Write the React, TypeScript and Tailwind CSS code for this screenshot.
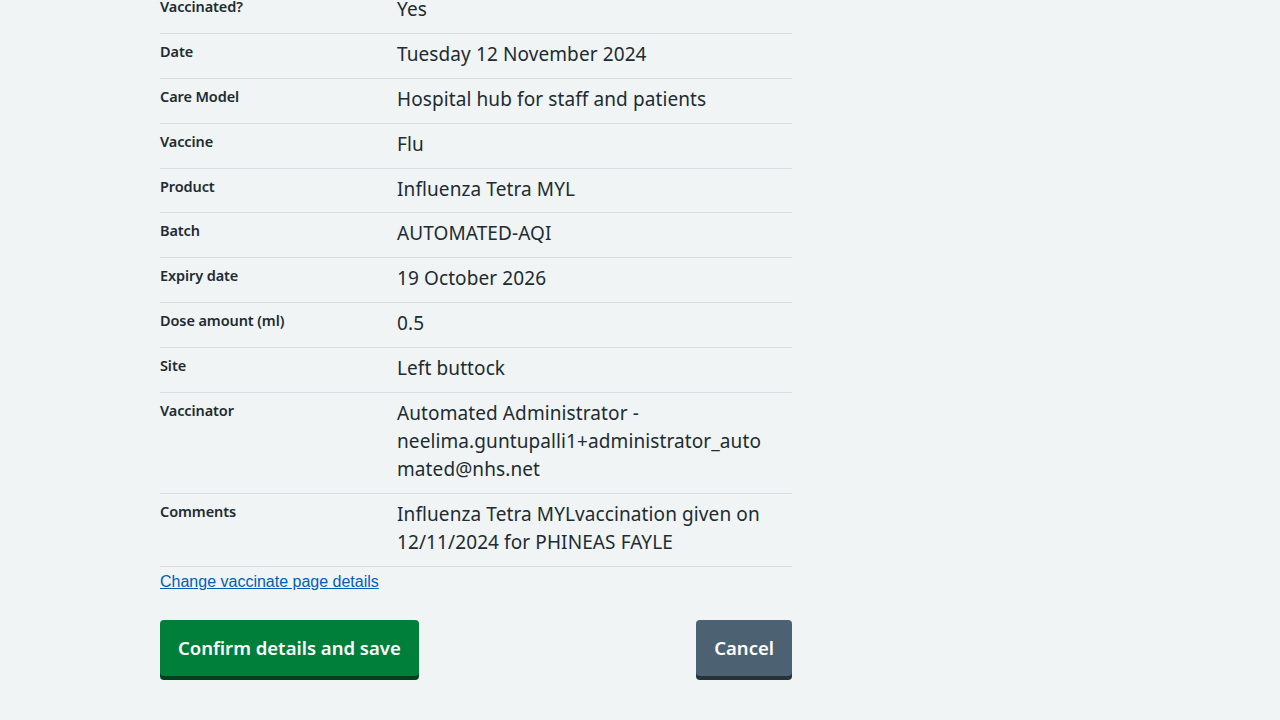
const rows: { label: string; value: string[] }[] = [
  { label: "Vaccinated?", value: ["Yes"] },
  { label: "Date", value: ["Tuesday 12 November 2024"] },
  { label: "Care Model", value: ["Hospital hub for staff and patients"] },
  { label: "Vaccine", value: ["Flu"] },
  { label: "Product", value: ["Influenza Tetra MYL"] },
  { label: "Batch", value: ["AUTOMATED-AQI"] },
  { label: "Expiry date", value: ["19 October 2026"] },
  { label: "Dose amount (ml)", value: ["0.5"] },
  { label: "Site", value: ["Left buttock"] },
  {
    label: "Vaccinator",
    value: ["Automated Administrator -", "neelima.guntupalli1+administrator_auto", "mated@nhs.net"],
  },
  {
    label: "Comments",
    value: ["Influenza Tetra MYLvaccination given on", "12/11/2024 for PHINEAS FAYLE"],
  },
]

export default function App() {
  return (
    <div
      className="flow-root min-h-screen bg-[#f0f4f5] text-[#212b32]"
      style={{ fontFamily: "'Noto Sans', 'Open Sans', sans-serif" }}
    >
      <main className="w-[632px] ml-[160px] -mt-[11px]">
        {/* summary list */}
        <dl>
          {rows.map((row) => (
            <div key={row.label} className="flex border-b border-[#d8dde0] pt-[6px] pb-[9.9px]">
              <dt className="w-[237px] shrink-0 text-[14.5px] leading-[22px] font-semibold tracking-[-0.1px]">
                {row.label}
              </dt>
              <dd className="text-[19px] leading-[28px] tracking-[0.1px]">
                {row.value.map((line) => (
                  <div key={line}>{line}</div>
                ))}
              </dd>
            </div>
          ))}
        </dl>

        <a
          href="#"
          className="block mt-[6px] text-[16px] leading-[18px] text-[#005eb8] underline"
          style={{ fontFamily: "'Liberation Sans', Arial, sans-serif" }}
        >
          Change vaccinate page details
        </a>

        <div className="flex justify-between mt-[29px]">
          <button className="h-[56px] px-[18px] rounded-[4px] bg-[#007f3b] text-white text-[18.5px] font-semibold shadow-[0_4px_0_#00401e]">
            Confirm details and save
          </button>
          <button className="h-[56px] px-[18px] rounded-[4px] bg-[#4c6272] text-white text-[18.5px] font-semibold shadow-[0_4px_0_#263139]">
            Cancel
          </button>
        </div>
      </main>
    </div>
  )
}
